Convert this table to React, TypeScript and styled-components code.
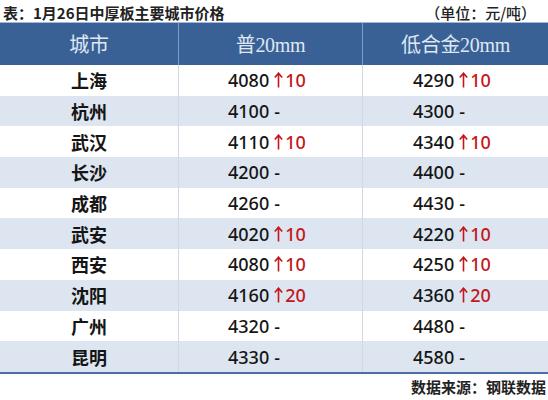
import styled, { createGlobalStyle } from "styled-components";

type Change = { value: string; delta?: string };
type Row = { city: string; plain: Change; alloy: Change };

const rows: Row[] = [
  { city: "上海", plain: { value: "4080", delta: "10" }, alloy: { value: "4290", delta: "10" } },
  { city: "杭州", plain: { value: "4100" }, alloy: { value: "4300" } },
  { city: "武汉", plain: { value: "4110", delta: "10" }, alloy: { value: "4340", delta: "10" } },
  { city: "长沙", plain: { value: "4200" }, alloy: { value: "4400" } },
  { city: "成都", plain: { value: "4260" }, alloy: { value: "4430" } },
  { city: "武安", plain: { value: "4020", delta: "10" }, alloy: { value: "4220", delta: "10" } },
  { city: "西安", plain: { value: "4080", delta: "10" }, alloy: { value: "4250", delta: "10" } },
  { city: "沈阳", plain: { value: "4160", delta: "20" }, alloy: { value: "4360", delta: "20" } },
  { city: "广州", plain: { value: "4320" }, alloy: { value: "4480" } },
  { city: "昆明", plain: { value: "4330" }, alloy: { value: "4580" } },
];

const GlobalStyle = createGlobalStyle`
  body {
    margin: 0;
    background: #ffffff;
    font-family: "Noto Sans", "Noto Sans CJK SC", sans-serif;
  }
`;

export default function App() {
  return (
    <Page>
      <GlobalStyle />
      <TitleBar>
        <Title>表：1月26日中厚板主要城市价格</Title>
        <Unit>（单位：元/吨）</Unit>
      </TitleBar>

      <Table>
        <HeadRow>
          <HeadCell>城市</HeadCell>
          <HeadCell>普20mm</HeadCell>
          <HeadCell last>低合金20mm</HeadCell>
        </HeadRow>
        {rows.map((r, i) => (
          <BodyRow key={r.city} striped={i % 2 === 1}>
            <CityCell>{r.city}</CityCell>
            <PriceCell><Price {...r.plain} /></PriceCell>
            <PriceCell last><Price {...r.alloy} /></PriceCell>
          </BodyRow>
        ))}
      </Table>

      <Source>数据来源：钢联数据</Source>
    </Page>
  );
}

// цена с изменением: стрелка вверх или прочерк
function Price({ value, delta }: Change) {
  return (
    <>
      <span>{value}</span>
      {delta ? (
        <Up>
          <svg width="9" height="16" viewBox="0 0 9 16">
            <path d="M4.5 15.5V1.8M0.8 5.6L4.5 1.2L8.2 5.6" fill="none" stroke="#c4161c" strokeWidth="1.6" />
          </svg>
          {delta}
        </Up>
      ) : (
        <Dash>-</Dash>
      )}
    </>
  );
}

interface CellProps {
  last?: boolean;
  striped?: boolean;
}

const Page = styled.div`
  width: 548px;
  height: 400px;
  overflow: hidden;
  display: flex;
  flex-direction: column;
`;

const TitleBar = styled.div`
  height: 22px;
  display: flex;
  align-items: center;
  justify-content: space-between;
  padding: 0 12px 0 3px;
  font-family: "Noto Sans CJK SC", sans-serif;
  font-size: 15px;
  color: #222;
`;

const Title = styled.div`
  font-weight: 700;
  margin-top: 3px;
`;

const Unit = styled.div`
  font-weight: 500;
  margin-top: 3px;
`;

const Table = styled.div`
  display: flex;
  flex-direction: column;
  border-top: 1px solid #9db8dc;
  border-bottom: 2px solid #4b6fa3;
`;

const HeadRow = styled.div`
  display: grid;
  grid-template-columns: 179px 184px 185px;
  height: 42px;
  background: #3a6195;
`;

const HeadCell = styled.div<CellProps>`
  display: flex;
  align-items: center;
  justify-content: center;
  font-family: "Liberation Serif", "Noto Sans CJK SC", serif;
  font-size: 20px;
  letter-spacing: -0.3px;
  color: #dfe8f3;
  border-right: ${p => (p.last ? "none" : "1px solid #7d9dc7")};
  padding-bottom: 2px;
`;

const BodyRow = styled.div<CellProps>`
  display: grid;
  grid-template-columns: 179px 184px 185px;
  height: 30.7px;
  background: ${p => (p.striped ? "#dce5f0" : "#ffffff")};
`;

const CityCell = styled.div`
  display: flex;
  align-items: center;
  justify-content: center;
  font-family: "Noto Sans CJK SC", sans-serif;
  font-weight: 700;
  font-size: 18px;
  color: #151515;
  border-right: 1px solid #cfd8e4;
`;

const PriceCell = styled.div<CellProps>`
  display: flex;
  align-items: center;
  padding-left: ${p => (p.last ? 50 : 49)}px;
  font-family: "Noto Sans", sans-serif;
  font-weight: 500;
  font-size: 18px;
  color: #151515;
  border-right: ${p => (p.last ? "none" : "1px solid #cfd8e4")};
`;

const Up = styled.span`
  display: inline-flex;
  align-items: center;
  gap: 2px;
  margin-left: 5px;
  color: #c4161c;
`;

const Dash = styled.span`
  margin-left: 5px;
`;

const Source = styled.div`
  height: 25px;
  display: flex;
  align-items: center;
  justify-content: flex-end;
  padding-right: 2px;
  font-family: "Noto Sans CJK SC", sans-serif;
  font-weight: 700;
  font-size: 15px;
  color: #222;
`;
